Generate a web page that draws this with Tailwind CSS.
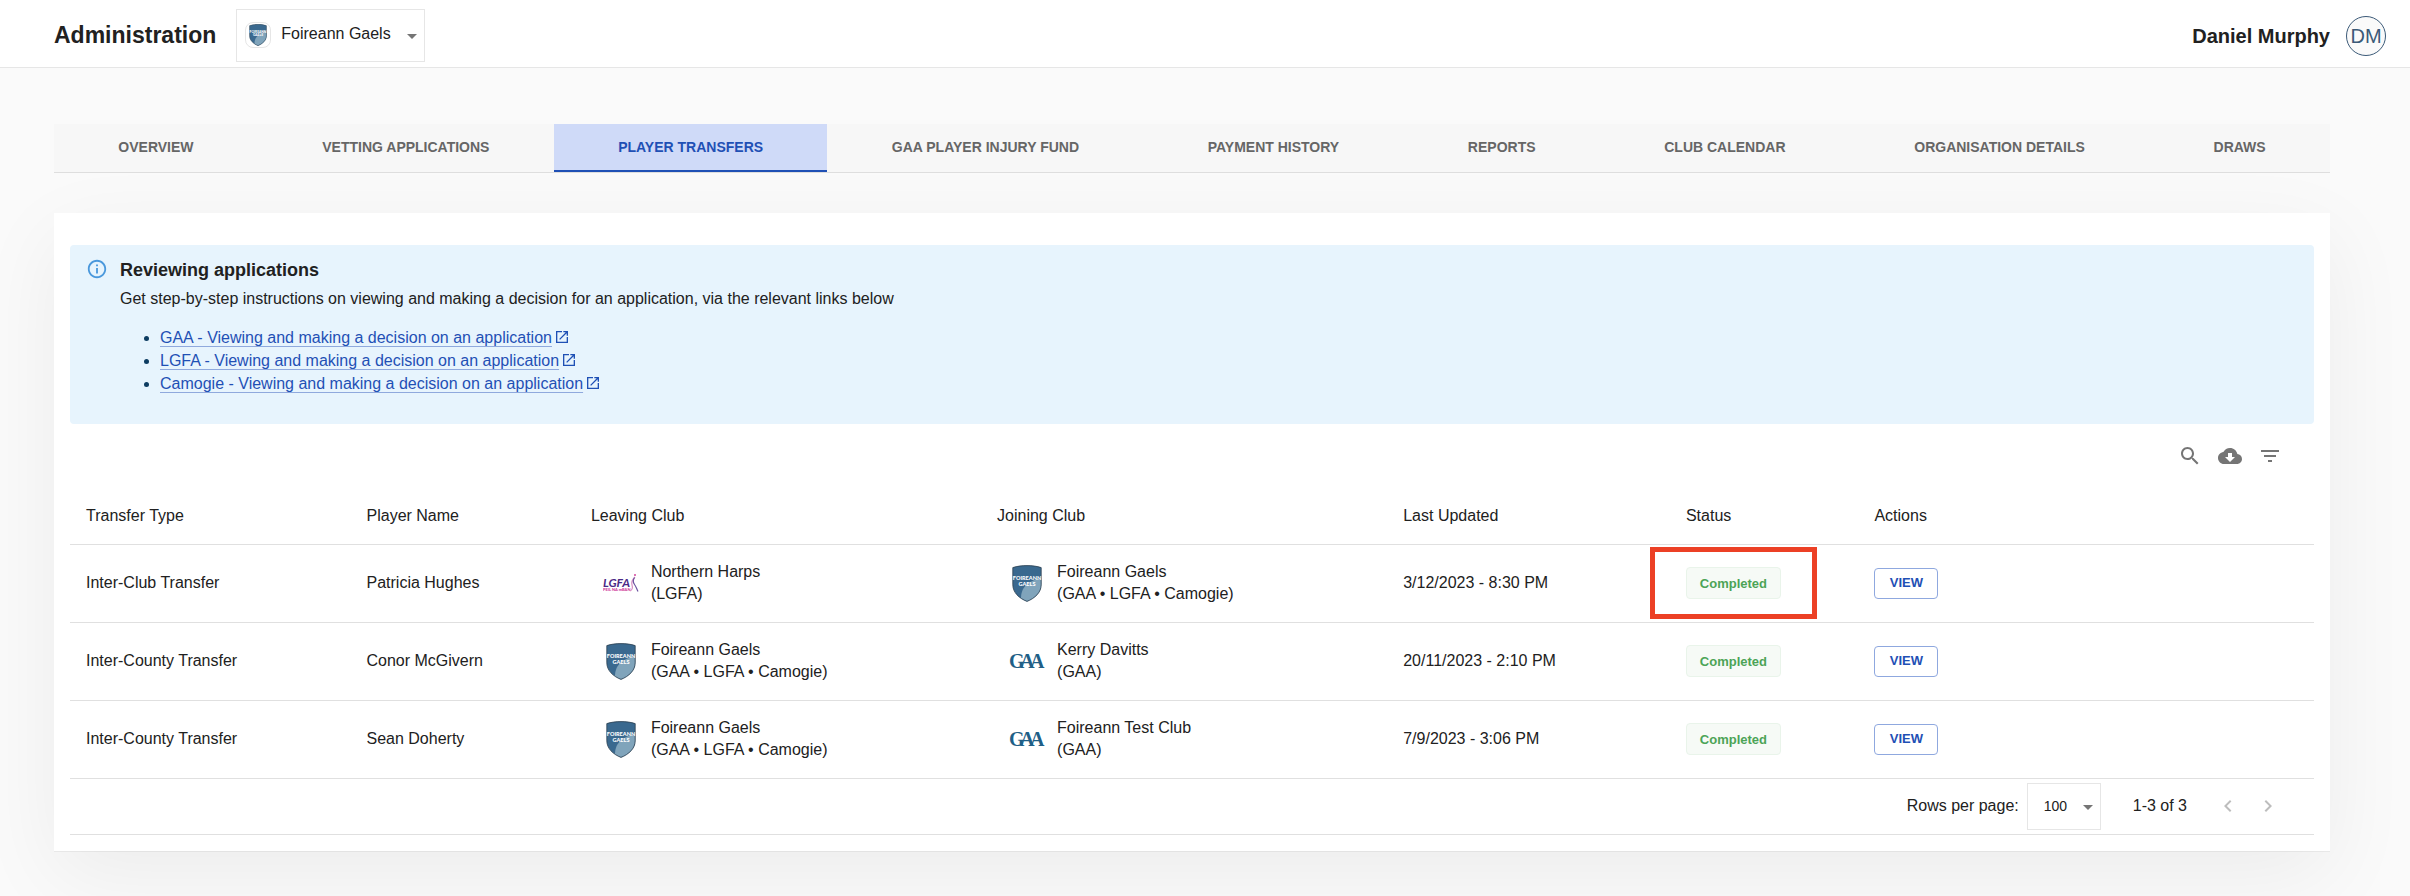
<!DOCTYPE html>
<html lang="en">
<head>
  <meta charset="UTF-8">
  <meta name="viewport" content="width=device-width, initial-scale=1.0">
  <title>Administration - Player Transfers</title>
  <script src="https://cdn.jsdelivr.net/npm/@tailwindcss/browser@4"></script>
</head>
<body class="bg-[#fafafa] min-h-screen text-base text-[#212121] font-['Liberation_Sans',Arial,sans-serif]">

  <!-- Shared logos and icons -->
  <svg class="hidden" aria-hidden="true">
    <symbol id="club-crest" viewBox="0 0 30 37">
      <path d="M.8 2.6C5 1.2 10 .6 15 .6s10 .6 14.200 2v17.200c0 7.700-6.500 13.700-14.200 16.600C7.300 33.500.8 27.500.8 19.800z" fill="#3a698f"/>
      <path d="M29.200 13C19 15.500 9 20 9 33.200c2 1.300 4 2.300 6 3 7.500-3 14.200-8.900 14.200-16.400z" fill="#80a4bb"/>
      <path d="M.8 2.600C5 1.200 10 .6 15 .6s10 .6 14.200 2v17.200c0 7.700-6.500 13.700-14.200 16.600C7.300 33.500.8 27.500.8 19.800z" fill="none" stroke="#2b3f4f" stroke-width=".8"/>
      <text x="15" y="15" text-anchor="middle" font-family="Lato, sans-serif" font-weight="900" font-size="5.500" fill="#fff">FOIREANN</text>
      <text x="15" y="20.500" text-anchor="middle" font-family="Lato, sans-serif" font-weight="900" font-size="5.500" fill="#fff">GAELS</text>
    </symbol>
    <symbol id="gaa-logo" viewBox="0 0 36 16">
      <text x="0 11 21" y="15" font-family="Liberation Serif, serif" font-weight="700" font-size="20" fill="#1f5f87">GAA</text>
    </symbol>
    <symbol id="lgfa-logo" viewBox="0 0 36 20">
      <text x="0" y="14" font-family="Lato, sans-serif" font-style="italic" font-weight="700" font-size="12" fill="#4b2a86">LGFA</text>
      <text x="0" y="18" font-family="Lato, sans-serif" font-weight="900" font-size="4" fill="#cf3f9b">PEIL NA mBAN</text>
      <circle cx="32" cy="2" r="1" fill="#d4479c"/>
      <path d="M32 4c-3 3-4 5-3 8s0 5-2 6" fill="none" stroke="#d990c4" stroke-width="1.200"/>
      <path d="M31.500 4.500c-2 3-1.500 5 0 7s2 4 3.500 7" fill="none" stroke="#6b53a0" stroke-width="1.200"/>
    </symbol>
    <symbol id="open-in-new" viewBox="0 0 24 24">
      <path d="M19 19H5V5h7V3H3v18h18v-9h-2v7zM14 3v2h3.590l-9.830 9.830 1.410 1.410L19 6.410V10h2V3h-7z" fill="currentColor"/>
    </symbol>
    <symbol id="caret" viewBox="0 0 10 5"><path d="M0 0l5 5 5-5z" fill="#757575"/></symbol>
  </svg>

  <!-- Header -->
  <header class="flex items-center h-[68px] pt-1 pl-[54px] pr-6 bg-white border-b border-[#e6e6e6]">
    <h1 class="text-[23px] font-bold">Administration</h1>
    <div class="relative ml-5 w-[189px]">
      <svg class="absolute left-[9px] top-[13px] w-[26px] h-[26px] p-px rounded-lg border border-[#e6e6e6] pointer-events-none"><use href="#club-crest"/></svg>
      <select aria-label="Organisation" class="appearance-none block w-full h-[53px] pl-11 pb-1 bg-transparent border border-[#e6e6e6]">
        <option>Foireann Gaels</option>
      </select>
      <svg class="absolute right-2 top-[25px] w-2.5 h-[5px] pointer-events-none"><use href="#caret"/></svg>
    </div>
    <div class="flex items-center gap-4 ml-auto">
      <span class="text-xl font-bold">Daniel Murphy</span>
      <span class="flex items-center justify-center size-10 rounded-full border border-[#3b5a78] bg-[#fafafa] text-xl text-[#3b5a78]">DM</span>
    </div>
  </header>

  <main class="pt-14 pb-[46px] pl-[54px] pr-20">
    <!-- Tabs -->
    <nav class="flex h-[49px] bg-black/1 border-b border-[#dedede] text-sm font-bold text-[#666666]">
      <button class="flex-auto pb-0.5">OVERVIEW</button>
      <button class="flex-auto pb-0.5">VETTING APPLICATIONS</button>
      <button class="flex-auto bg-[#cfdaf8] text-[#1f50b5] border-b-2 border-[#1f50b5]">PLAYER TRANSFERS</button>
      <button class="flex-auto pb-0.5">GAA PLAYER INJURY FUND</button>
      <button class="flex-auto pb-0.5">PAYMENT HISTORY</button>
      <button class="flex-auto pb-0.5">REPORTS</button>
      <button class="flex-auto pb-0.5">CLUB CALENDAR</button>
      <button class="flex-auto pb-0.5">ORGANISATION DETAILS</button>
      <button class="flex-auto pb-0.5">DRAWS</button>
    </nav>

    <section class="mt-10 px-4 pt-8 pb-4 bg-white shadow-[0_1px_0_rgba(0,0,0,0.05),0_24px_80px_rgba(0,0,0,0.06)]">
      <!-- Info box -->
      <div class="flex gap-3 px-4 pt-[13px] pb-[29px] rounded bg-[#e7f4fd] leading-[22px]">
        <svg class="size-[22px] shrink-0 text-[#4a98dc]" viewBox="0 0 24 24" fill="currentColor"><path d="M11 7h2v2h-2V7zm0 4h2v6h-2v-6zm1-9C6.480 2 2 6.480 2 12s4.480 10 10 10 10-4.480 10-10S17.520 2 12 2zm0 18c-4.410 0-8-3.590-8-8s3.590-8 8-8 8 3.590 8 8-3.590 8-8 8z"/></svg>
        <div>
          <h2 class="text-lg leading-6 font-bold">Reviewing applications</h2>
          <p class="mt-1.5">Get step-by-step instructions on viewing and making a decision for an application, via the relevant links below</p>
          <ul class="mt-4 pl-10 list-disc leading-[23px] marker:text-[#0d3c61] text-[#1f50b5]">
            <li><a href="#" class="underline decoration-[#8fa9dd] underline-offset-3">GAA - Viewing and making a decision on an application</a><svg class="inline size-4 ml-0.5 mb-1"><use href="#open-in-new"/></svg></li>
            <li><a href="#" class="underline decoration-[#8fa9dd] underline-offset-3">LGFA - Viewing and making a decision on an application</a><svg class="inline size-4 ml-0.5 mb-1"><use href="#open-in-new"/></svg></li>
            <li><a href="#" class="underline decoration-[#8fa9dd] underline-offset-3">Camogie - Viewing and making a decision on an application</a><svg class="inline size-4 ml-0.5 mb-1"><use href="#open-in-new"/></svg></li>
          </ul>
        </div>
      </div>

      <!-- Toolbar -->
      <div class="flex justify-end gap-4 py-5 pr-8 text-[#757575]">
        <button aria-label="Search"><svg class="size-6" viewBox="0 0 24 24" fill="currentColor"><path d="M15.500 14h-.79l-.28-.27C15.410 12.590 16 11.110 16 9.500 16 5.910 13.090 3 9.500 3S3 5.910 3 9.500 5.910 16 9.500 16c1.610 0 3.090-.59 4.230-1.570l.27.28v.79l5 4.990L20.490 19l-4.990-5zm-6 0C7.010 14 5 11.990 5 9.500S7.010 5 9.500 5 14 7.010 14 9.500 11.990 14 9.500 14z"/></svg></button>
        <button aria-label="Download"><svg class="size-6" viewBox="0 0 24 24" fill="currentColor"><path d="M19.350 10.040C18.670 6.590 15.640 4 12 4 9.110 4 6.600 5.640 5.350 8.040 2.340 8.360 0 10.910 0 14c0 3.310 2.690 6 6 6h13c2.760 0 5-2.240 5-5 0-2.640-2.050-4.780-4.650-4.960zM17 13l-5 5-5-5h3V9h4v4h3z"/></svg></button>
        <button aria-label="Filter"><svg class="size-6" viewBox="0 0 24 24" fill="currentColor"><path d="M10 18h4v-2h-4v2zM3 6v2h18V6H3zm3 7h12v-2H6v2z"/></svg></button>
      </div>

      <!-- Transfers -->
      <table class="w-full table-fixed text-left leading-[22px]">
        <thead>
          <tr class="h-14 border-b border-[#e0e0e0]">
            <th class="w-[12.5%] px-4 font-normal">Transfer Type</th>
            <th class="w-[10%] px-4 font-normal">Player Name</th>
            <th class="w-[18.1%] px-4 font-normal">Leaving Club</th>
            <th class="w-[18.1%] px-4 font-normal">Joining Club</th>
            <th class="w-[12.6%] px-4 font-normal">Last Updated</th>
            <th class="w-[8.4%] px-4 font-normal">Status</th>
            <th class="px-4 font-normal">Actions</th>
          </tr>
        </thead>
        <tbody>
          <tr class="h-[78px] border-b border-[#e0e0e0]">
            <td class="px-4">Inter-Club Transfer</td>
            <td class="px-4">Patricia Hughes</td>
            <td class="px-4">
              <div class="flex items-center">
                <div class="flex justify-center w-15"><svg class="w-9 h-5"><use href="#lgfa-logo"/></svg></div>
                <div>Northern Harps<br>(LGFA)</div>
              </div>
            </td>
            <td class="px-4">
              <div class="flex items-center">
                <div class="flex justify-center w-15"><svg class="w-[30px] h-[37px]"><use href="#club-crest"/></svg></div>
                <div>Foireann Gaels<br>(GAA • LGFA • Camogie)</div>
              </div>
            </td>
            <td class="px-4">3/12/2023 - 8:30 PM</td>
            <td class="px-4">
              <div class="relative flex w-[95px]">
                <span class="w-full h-8 leading-8 rounded border border-[#e9f4ea] bg-[#f6faf6] text-center text-[13px] font-bold text-[#4ca457]">Completed</span>
                <!-- Highlight -->
                <div class="absolute -inset-x-9 -inset-y-5 border-5 border-[#ec4025]"></div>
              </div>
            </td>
            <td class="px-4"><button class="block w-16 h-[31px] rounded border border-[#8fa8df] text-[13px] font-bold text-[#1f50b5]">VIEW</button></td>
          </tr>
          <tr class="h-[78px] border-b border-[#e0e0e0]">
            <td class="px-4">Inter-County Transfer</td>
            <td class="px-4">Conor McGivern</td>
            <td class="px-4">
              <div class="flex items-center">
                <div class="flex justify-center w-15"><svg class="w-[30px] h-[37px]"><use href="#club-crest"/></svg></div>
                <div>Foireann Gaels<br>(GAA • LGFA • Camogie)</div>
              </div>
            </td>
            <td class="px-4">
              <div class="flex items-center">
                <div class="flex justify-center w-15"><svg class="w-9 h-4"><use href="#gaa-logo"/></svg></div>
                <div>Kerry Davitts<br>(GAA)</div>
              </div>
            </td>
            <td class="px-4">20/11/2023 - 2:10 PM</td>
            <td class="px-4">
              <div class="flex w-[95px]">
                <span class="w-full h-8 leading-8 rounded border border-[#e9f4ea] bg-[#f6faf6] text-center text-[13px] font-bold text-[#4ca457]">Completed</span>
              </div>
            </td>
            <td class="px-4"><button class="block w-16 h-[31px] rounded border border-[#8fa8df] text-[13px] font-bold text-[#1f50b5]">VIEW</button></td>
          </tr>
          <tr class="h-[78px] border-b border-[#e0e0e0]">
            <td class="px-4">Inter-County Transfer</td>
            <td class="px-4">Sean Doherty</td>
            <td class="px-4">
              <div class="flex items-center">
                <div class="flex justify-center w-15"><svg class="w-[30px] h-[37px]"><use href="#club-crest"/></svg></div>
                <div>Foireann Gaels<br>(GAA • LGFA • Camogie)</div>
              </div>
            </td>
            <td class="px-4">
              <div class="flex items-center">
                <div class="flex justify-center w-15"><svg class="w-9 h-4"><use href="#gaa-logo"/></svg></div>
                <div>Foireann Test Club<br>(GAA)</div>
              </div>
            </td>
            <td class="px-4">7/9/2023 - 3:06 PM</td>
            <td class="px-4">
              <div class="flex w-[95px]">
                <span class="w-full h-8 leading-8 rounded border border-[#e9f4ea] bg-[#f6faf6] text-center text-[13px] font-bold text-[#4ca457]">Completed</span>
              </div>
            </td>
            <td class="px-4"><button class="block w-16 h-[31px] rounded border border-[#8fa8df] text-[13px] font-bold text-[#1f50b5]">VIEW</button></td>
          </tr>
        </tbody>
      </table>

      <!-- Pagination -->
      <div class="flex items-center justify-end h-14 pr-[34px] border-b border-[#e0e0e0]">
        <label for="rows-per-page">Rows per page:</label>
        <div class="relative ml-2 mr-8">
          <select id="rows-per-page" class="appearance-none block w-[74px] h-[47px] pl-4 bg-white border border-[#e6e6e6] text-sm">
            <option>100</option>
          </select>
          <svg class="absolute right-2 top-[22px] w-2.5 h-[5px] pointer-events-none"><use href="#caret"/></svg>
        </div>
        <span class="mr-[29px]">1-3 of 3</span>
        <button aria-label="Previous page" disabled class="mr-4 text-[#bdbdbd]"><svg class="size-6" viewBox="0 0 24 24" fill="currentColor"><path d="M15.410 7.410L14 6l-6 6 6 6 1.410-1.410L10.830 12z"/></svg></button>
        <button aria-label="Next page" disabled class="text-[#bdbdbd]"><svg class="size-6" viewBox="0 0 24 24" fill="currentColor"><path d="M10 6L8.590 7.410 13.170 12l-4.580 4.590L10 18l6-6z"/></svg></button>
      </div>
    </section>
  </main>

</body>
</html>
